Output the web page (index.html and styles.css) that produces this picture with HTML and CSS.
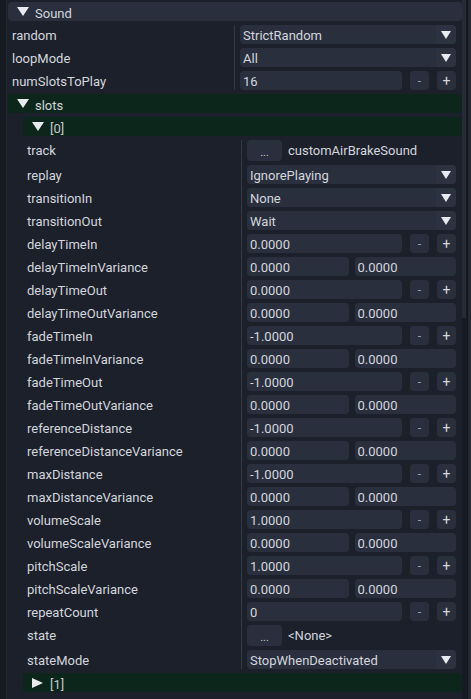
FILE: index.html
```html
<!DOCTYPE html>
<html>
<head>
<meta charset="utf-8">
<link rel="stylesheet" href="styles.css">
</head>
<body>
<div class="window">
  <div class="edge"></div>
  <div class="content">
    <div class="header"><span class="tri down"></span><span class="htext">Sound</span></div>
    <div class="props top">
      <div class="row"><div class="label">random</div><div class="value"><div class="combo"><span class="ctext">StrictRandom</span><span class="arrow"><span class="stri"></span></span></div></div></div>
      <div class="row"><div class="label">loopMode</div><div class="value"><div class="combo"><span class="ctext">All</span><span class="arrow"><span class="stri"></span></span></div></div></div>
      <div class="row"><div class="label">numSlotsToPlay</div><div class="value"><div class="field">16</div><div class="btn">-</div><div class="btn plus">+</div></div></div>
    </div>
    <div class="tree lvl1"><span class="tri down"></span><span class="htext">slots</span></div>
    <div class="tree lvl2"><span class="tri down"></span><span class="htext idx">[0]</span></div>
    <div class="props nested">
      <div class="row brow"><div class="label">track</div><div class="value"><div class="dots">...</div><span class="reftext">customAirBrakeSound</span></div></div>
      <div class="row"><div class="label">replay</div><div class="value"><div class="combo"><span class="ctext">IgnorePlaying</span><span class="arrow"><span class="stri"></span></span></div></div></div>
      <div class="row"><div class="label">transitionIn</div><div class="value"><div class="combo"><span class="ctext">None</span><span class="arrow"><span class="stri"></span></span></div></div></div>
      <div class="row"><div class="label">transitionOut</div><div class="value"><div class="combo"><span class="ctext">Wait</span><span class="arrow"><span class="stri"></span></span></div></div></div>
      <div class="row"><div class="label">delayTimeIn</div><div class="value"><div class="field">0.0000</div><div class="btn">-</div><div class="btn plus">+</div></div></div>
      <div class="row"><div class="label">delayTimeInVariance</div><div class="value pair"><div class="field">0.0000</div><div class="field">0.0000</div></div></div>
      <div class="row"><div class="label">delayTimeOut</div><div class="value"><div class="field">0.0000</div><div class="btn">-</div><div class="btn plus">+</div></div></div>
      <div class="row"><div class="label">delayTimeOutVariance</div><div class="value pair"><div class="field">0.0000</div><div class="field">0.0000</div></div></div>
      <div class="row"><div class="label">fadeTimeIn</div><div class="value"><div class="field">-1.0000</div><div class="btn">-</div><div class="btn plus">+</div></div></div>
      <div class="row"><div class="label">fadeTimeInVariance</div><div class="value pair"><div class="field">0.0000</div><div class="field">0.0000</div></div></div>
      <div class="row"><div class="label">fadeTimeOut</div><div class="value"><div class="field">-1.0000</div><div class="btn">-</div><div class="btn plus">+</div></div></div>
      <div class="row"><div class="label">fadeTimeOutVariance</div><div class="value pair"><div class="field">0.0000</div><div class="field">0.0000</div></div></div>
      <div class="row"><div class="label">referenceDistance</div><div class="value"><div class="field">-1.0000</div><div class="btn">-</div><div class="btn plus">+</div></div></div>
      <div class="row"><div class="label">referenceDistanceVariance</div><div class="value pair"><div class="field">0.0000</div><div class="field">0.0000</div></div></div>
      <div class="row"><div class="label">maxDistance</div><div class="value"><div class="field">-1.0000</div><div class="btn">-</div><div class="btn plus">+</div></div></div>
      <div class="row"><div class="label">maxDistanceVariance</div><div class="value pair"><div class="field">0.0000</div><div class="field">0.0000</div></div></div>
      <div class="row"><div class="label">volumeScale</div><div class="value"><div class="field">1.0000</div><div class="btn">-</div><div class="btn plus">+</div></div></div>
      <div class="row"><div class="label">volumeScaleVariance</div><div class="value pair"><div class="field">0.0000</div><div class="field">0.0000</div></div></div>
      <div class="row"><div class="label">pitchScale</div><div class="value"><div class="field">1.0000</div><div class="btn">-</div><div class="btn plus">+</div></div></div>
      <div class="row"><div class="label">pitchScaleVariance</div><div class="value pair"><div class="field">0.0000</div><div class="field">0.0000</div></div></div>
      <div class="row"><div class="label">repeatCount</div><div class="value"><div class="field">0</div><div class="btn">-</div><div class="btn plus">+</div></div></div>
      <div class="row brow"><div class="label">state</div><div class="value"><div class="dots">...</div><span class="reftext">&lt;None&gt;</span></div></div>
      <div class="row"><div class="label">stateMode</div><div class="value"><div class="combo"><span class="ctext">StopWhenDeactivated</span><span class="arrow"><span class="stri"></span></span></div></div></div>
    </div>
    <div class="tree lvl2"><span class="tri right"></span><span class="htext idx">[1]</span></div>
  </div>
  <div class="scroll"><div class="thumb"></div></div>
  <div class="outer"></div>
</div>
</body>
</html>
```

FILE: styles.css
```css
html, body {
  margin: 0;
  padding: 0;
  background: #1c202b;
}
body {
  width: 471px;
  height: 699px;
  overflow: hidden;
  font-family: Roboto, "Liberation Sans", sans-serif;
  font-size: 13px;
  color: #d3d6dd;
}
.window {
  display: flex;
  width: 471px;
  height: 699px;
}
.edge {
  width: 6px;
  background: #171a23;
  border-right: 1px solid #222632;
  flex: none;
}
.content {
  flex: 1;
  display: flex;
  flex-direction: column;
  gap: 4px;
  padding: 2px 0 0 1px;
  min-width: 0;
}
.scroll {
  width: 5px;
  flex: none;
  background: #161a22;
}
.thumb {
  width: 4px;
  height: 318px;
  background: #262b37;
}
.outer {
  width: 3px;
  flex: none;
  background: #252935;
  border-left: 1px solid #12151c;
}
.header {
  height: 19px;
  background: #2a2f3d;
  border-radius: 4px;
  display: flex;
  align-items: center;
  padding-left: 9px;
  gap: 6px;
}
.tree {
  height: 19px;
  background: #0c261b;
  border-radius: 3px;
  display: flex;
  align-items: center;
  padding-left: 9px;
  gap: 6px;
}
.htext {
  line-height: 19px;
  padding-top: 3px;
}
.tree.lvl2 {
  margin-left: 15px;
}
.idx {
  color: #c3c7cf;
}
.tri {
  width: 0;
  height: 0;
  flex: none;
}
.tri.down {
  border-left: 6px solid transparent;
  border-right: 6px solid transparent;
  border-top: 9px solid #e8eaef;
}
.tri.right {
  border-top: 5.5px solid transparent;
  border-bottom: 5.5px solid transparent;
  border-left: 11px solid #e8eaef;
  margin-right: 1px;
}
.props {
  display: flex;
  flex-direction: column;
  gap: 4px;
  background-repeat: no-repeat;
  background-size: 1px 100%;
  background-image: linear-gradient(#343947, #343947);
}
.props.top {
  background-position: 226px 0;
}
.props.nested {
  background-position: 233px 0;
}
.row {
  display: grid;
  height: 19px;
  line-height: 22px;
}
.props.top .row {
  grid-template-columns: 232px 1fr;
}
.props.top .label {
  padding-left: 4px;
}
.props.nested .row {
  grid-template-columns: 239px 1fr;
}
.props.nested .label {
  padding-left: 19px;
}
.row.brow {
  height: 21px;
  line-height: 22px;
}
.label {
  white-space: nowrap;
  overflow: hidden;
}
.value {
  display: flex;
  gap: 8px;
  padding-right: 6px;
  min-width: 0;
}
.value.pair {
  gap: 6px;
}
.value.pair .field {
  flex: 1;
}
.field {
  flex: 1;
  height: 19px;
  background: #2a2f3d;
  border-radius: 4px;
  padding-left: 3px;
  box-sizing: border-box;
  white-space: nowrap;
}
.btn {
  width: 19px;
  height: 19px;
  flex: none;
  background: #2a2f3d;
  border-radius: 4px;
  text-align: center;
  color: #9da2ad;
  font-size: 12px;
  line-height: 21px;
}
.btn.plus {
  color: #d3d6dd;
  font-size: 14px;
  line-height: 20px;
}
.combo {
  flex: 1;
  display: flex;
  height: 19px;
  background: #2a2f3d;
  border-radius: 4px;
  overflow: hidden;
}
.ctext {
  flex: 1;
  padding-left: 3px;
  white-space: nowrap;
}
.arrow {
  width: 20px;
  flex: none;
  background: #2d3241;
  display: flex;
  align-items: center;
  justify-content: center;
}
.stri {
  width: 0;
  height: 0;
  border-left: 5.5px solid transparent;
  border-right: 5.5px solid transparent;
  border-top: 8px solid #e8eaef;
}
.dots {
  width: 35px;
  height: 21px;
  flex: none;
  background: #2a2f3d;
  border-radius: 4px;
  text-align: center;
  font-size: 11px;
  line-height: 26px;
  color: #c9ccd3;
}
.reftext {
  margin-left: -2px;
  white-space: nowrap;
}
```
